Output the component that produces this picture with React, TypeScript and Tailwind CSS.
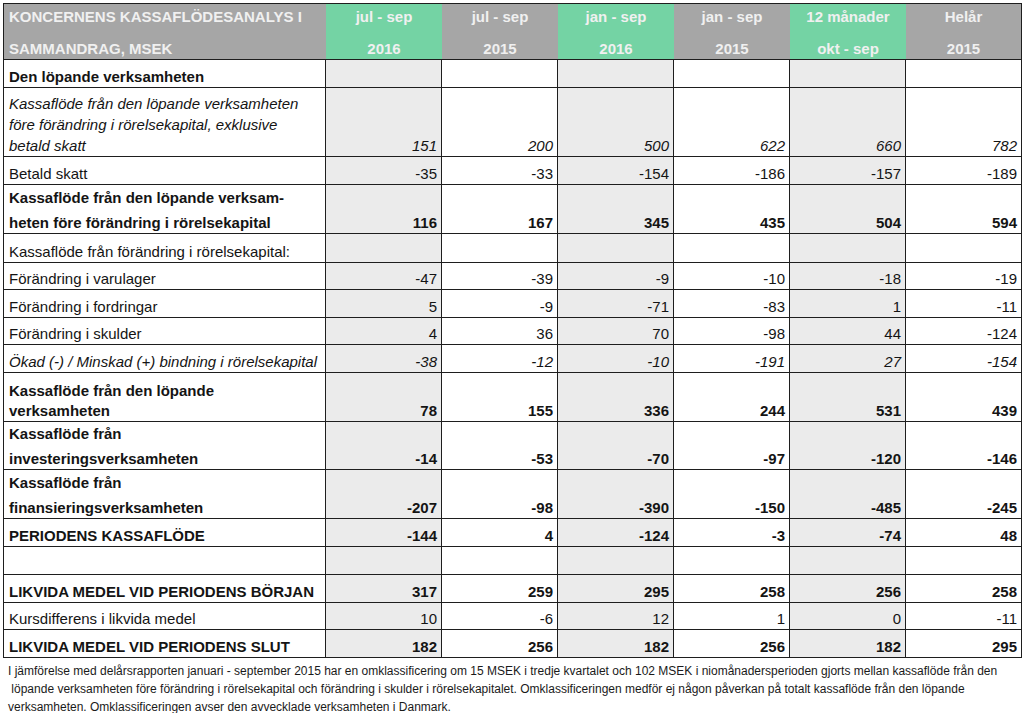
const cols = "grid grid-cols-[322px_repeat(5,116px)_115px]"

type Row = {
  h: string
  lines: string[]
  style?: "bold" | "italic"
  values?: string[]
  gap?: string
}

const headers = [
  { top: "jul - sep", bottom: "2016", green: true },
  { top: "jul - sep", bottom: "2015", green: false },
  { top: "jan - sep", bottom: "2016", green: true },
  { top: "jan - sep", bottom: "2015", green: false },
  { top: "12 månader", bottom: "okt - sep", green: true },
  { top: "Helår", bottom: "2015", green: false },
]

const rows: Row[] = [
  { h: "h-[28px]", lines: ["Den löpande verksamheten"], style: "bold" },
  {
    h: "h-[69px]",
    lines: [
      "Kassaflöde från den löpande verksamheten",
      "före förändring i rörelsekapital, exklusive",
      "betald skatt",
    ],
    style: "italic",
    values: ["151", "200", "500", "622", "660", "782"],
    gap: "gap-[3px]",
  },
  { h: "h-[28px]", lines: ["Betald skatt"], values: ["-35", "-33", "-154", "-186", "-157", "-189"] },
  {
    h: "h-[49px]",
    lines: ["Kassaflöde från den löpande verksam-", "heten före förändring i rörelsekapital"],
    style: "bold",
    values: ["116", "167", "345", "435", "504", "594"],
    gap: "gap-[7px]",
  },
  { h: "h-[29px]", lines: ["Kassaflöde från förändring i rörelsekapital:"] },
  { h: "h-[27px]", lines: ["Förändring i varulager"], values: ["-47", "-39", "-9", "-10", "-18", "-19"] },
  { h: "h-[28px]", lines: ["Förändring i fordringar"], values: ["5", "-9", "-71", "-83", "1", "-11"] },
  { h: "h-[27px]", lines: ["Förändring i skulder"], values: ["4", "36", "70", "-98", "44", "-124"] },
  {
    h: "h-[28px]",
    lines: ["Ökad (-) / Minskad (+) bindning i rörelsekapital"],
    style: "italic",
    values: ["-38", "-12", "-10", "-191", "27", "-154"],
  },
  {
    h: "h-[49px]",
    lines: ["Kassaflöde från den löpande", "verksamheten"],
    style: "bold",
    values: ["78", "155", "336", "244", "531", "439"],
    gap: "gap-[2px]",
  },
  {
    h: "h-[48px]",
    lines: ["Kassaflöde från", "investeringsverksamheten"],
    style: "bold",
    values: ["-14", "-53", "-70", "-97", "-120", "-146"],
    gap: "gap-[7px]",
  },
  {
    h: "h-[49px]",
    lines: ["Kassaflöde från", "finansieringsverksamheten"],
    style: "bold",
    values: ["-207", "-98", "-390", "-150", "-485", "-245"],
    gap: "gap-[7px]",
  },
  { h: "h-[28px]", lines: ["PERIODENS KASSAFLÖDE"], style: "bold", values: ["-144", "4", "-124", "-3", "-74", "48"] },
  { h: "h-[28px]", lines: [] },
  {
    h: "h-[28px]",
    lines: ["LIKVIDA MEDEL VID PERIODENS BÖRJAN"],
    style: "bold",
    values: ["317", "259", "295", "258", "256", "258"],
  },
  { h: "h-[27px]", lines: ["Kursdifferens i likvida medel"], values: ["10", "-6", "12", "1", "0", "-11"] },
  {
    h: "h-[28px]",
    lines: ["LIKVIDA MEDEL VID PERIODENS SLUT"],
    style: "bold",
    values: ["182", "256", "182", "256", "182", "295"],
  },
]

function TableRow({ row }: { row: Row }) {
  const font = row.style === "bold" ? "font-bold" : row.style === "italic" ? "italic" : ""
  return (
    <div className={`${cols} ${row.h} border-b border-[#1e1e1e] ${font}`}>
      <div className={`flex flex-col justify-end border-r border-[#1e1e1e] pl-[5px] pb-[1px] ${row.gap ?? ""}`}>
        {row.lines.map((l) => (
          <div key={l} className="leading-[18px] whitespace-nowrap">
            {l}
          </div>
        ))}
      </div>
      {[0, 1, 2, 3, 4, 5].map((i) => (
        <div
          key={i}
          className={`flex items-end justify-end pr-[4px] pb-[1px] leading-[18px] ${
            i < 5 ? "border-r border-[#1e1e1e]" : ""
          } ${i % 2 === 0 ? "bg-[#ebebeb]" : "bg-white"}`}
        >
          {row.values ? row.values[i] : ""}
        </div>
      ))}
    </div>
  )
}

export default function App() {
  return (
    <div className="min-h-screen bg-white pt-[3px] pl-[3px] text-[15px] text-[#141414] font-['Liberation_Sans',Arial,sans-serif]">
      <div className="w-[1019px] border-l border-t border-r border-[#1e1e1e]">
        <div className={`${cols} h-[56px] border-b border-[#1e1e1e] bg-[#a6a6a6] font-bold text-[#f0f0f0]`}>
          <div className="flex flex-col justify-between pt-[3px] pl-[5px] leading-[20px] whitespace-nowrap">
            <div>KONCERNENS KASSAFLÖDESANALYS I</div>
            <div>SAMMANDRAG, MSEK</div>
          </div>
          {headers.map((h, i) => (
            <div
              key={i}
              className={`flex flex-col justify-between items-center pt-[3px] leading-[20px] ${
                h.green ? "bg-[#74d3a4]" : ""
              }`}
            >
              <div>{h.top}</div>
              <div>{h.bottom}</div>
            </div>
          ))}
        </div>
        {rows.map((r, i) => (
          <TableRow key={i} row={r} />
        ))}
      </div>
      <div className="mt-[4px] pl-[5px] text-[12px] leading-[18px] whitespace-pre text-[#1a1a1a]">
        <div>
          I jämförelse med delårsrapporten januari - september 2015 har en omklassificering om 15 MSEK i tredje kvartalet och 102 MSEK i niomånadersperioden gjorts mellan kassaflöde från den
        </div>
        <div>
          {" "}löpande verksamheten före förändring i rörelsekapital och förändring i skulder i rörelsekapitalet. Omklassificeringen medför ej någon påverkan på totalt kassaflöde från den löpande
        </div>
        <div>verksamheten. Omklassificeringen avser den avvecklade verksamheten i Danmark.</div>
      </div>
    </div>
  )
}
